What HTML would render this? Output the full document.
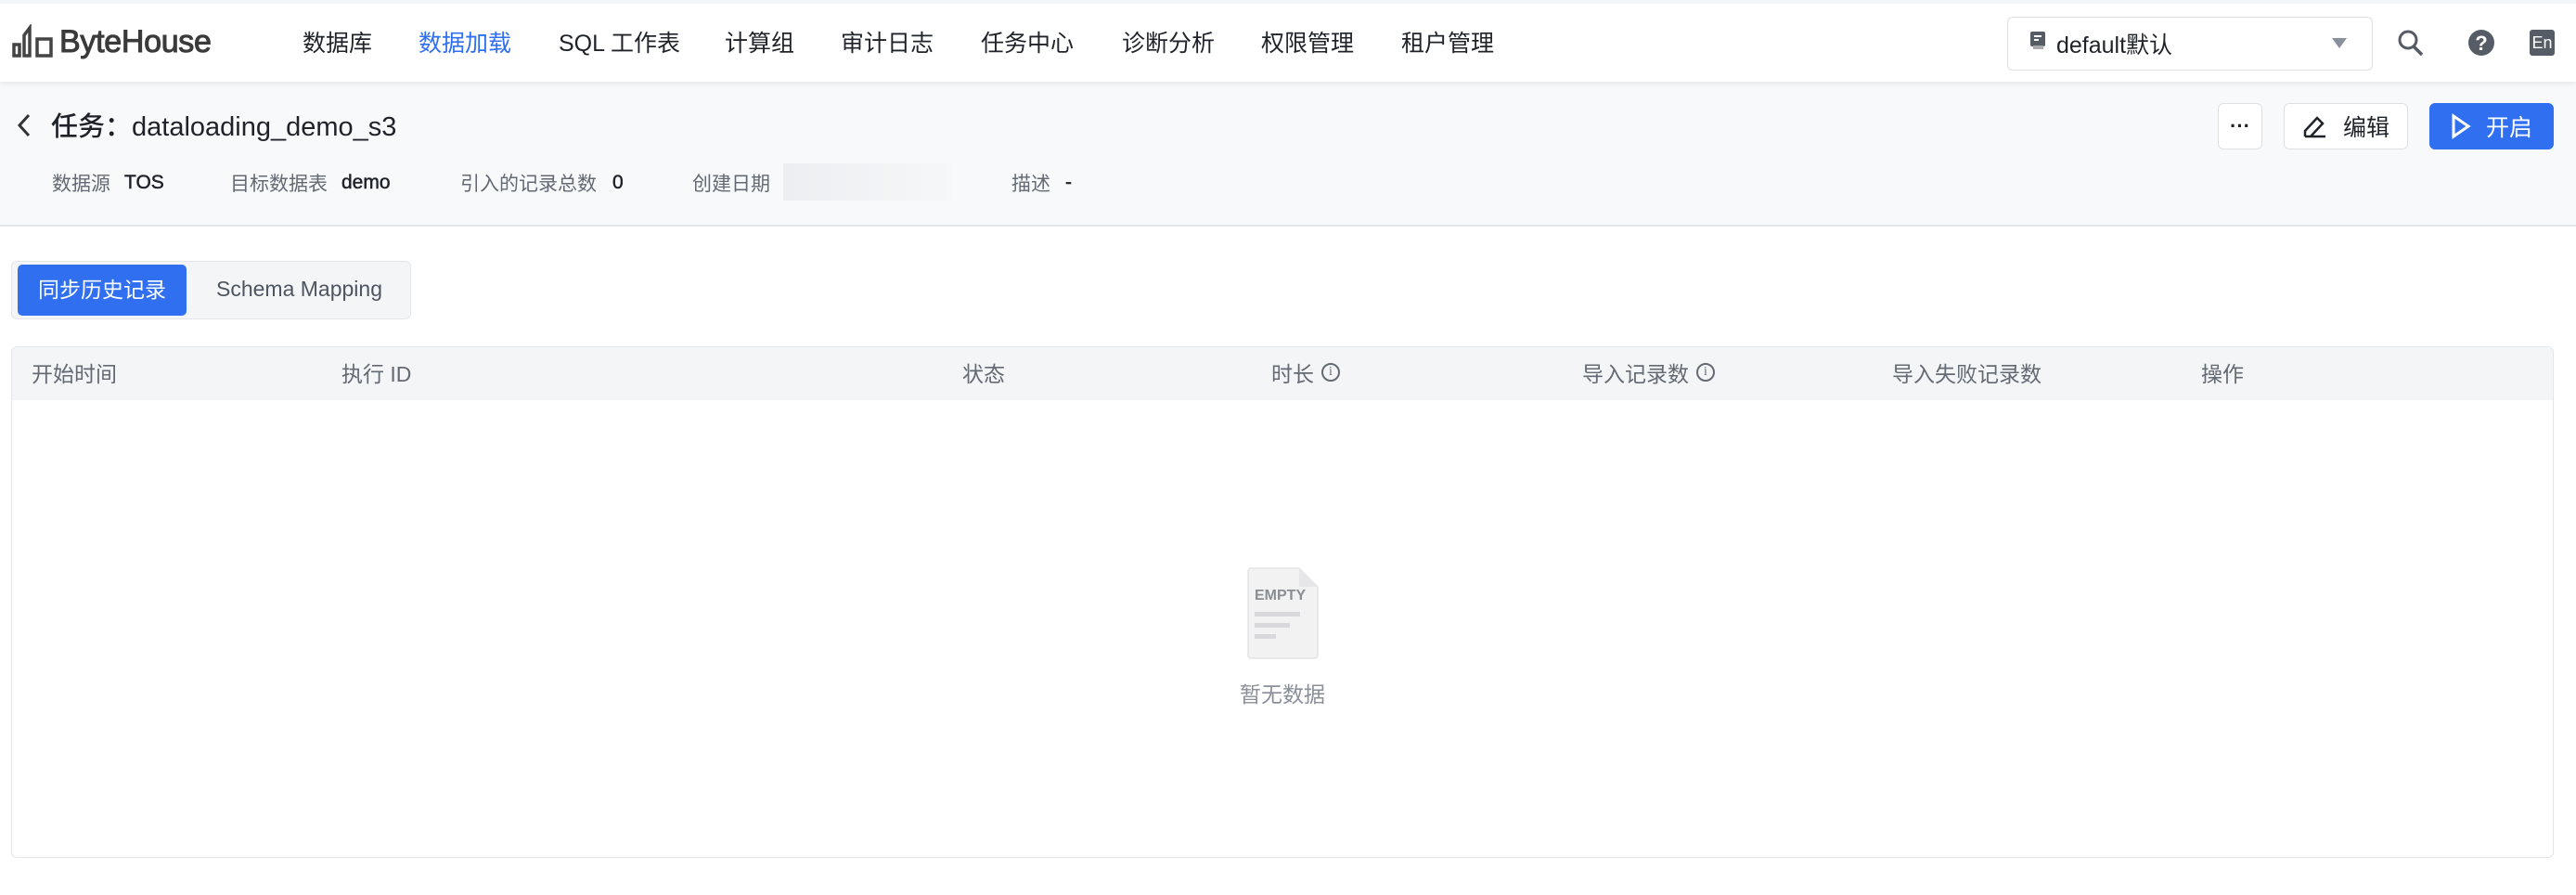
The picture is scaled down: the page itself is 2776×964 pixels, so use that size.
<!DOCTYPE html>
<html><head><meta charset="utf-8"><style>
*{box-sizing:border-box;margin:0;padding:0}
body{width:2776px;height:964px;background:#fff;font-family:"Liberation Sans","Noto Sans CJK SC",sans-serif;position:relative;overflow:hidden;color:#1f2329}
.abs{position:absolute;white-space:nowrap}
#hdr{position:absolute;left:0;top:0;width:2776px;height:88px;background:#fff;box-shadow:0 2px 6px rgba(0,0,0,.08);z-index:2;border-top:4px solid #f4f5f7}
.nav{font-size:25px;color:#1f2329;top:23px}
#sub{position:absolute;left:0;top:88px;width:2776px;height:156px;background:#f8f9fb;border-bottom:2px solid #e4e6ea}
.meta{font-size:21px;top:182px;color:#646a73}
.metav{font-size:21px;top:185px;color:#1f2329;-webkit-text-stroke:0.5px #1f2329}
.btn{position:absolute;top:111px;height:50px;border:1px solid #dee0e3;border-radius:6px;background:#fff;font-size:25px;display:flex;align-items:center;justify-content:center}
.th{font-size:23px;color:#646a73;top:384px;display:flex;align-items:center}
.ic{display:inline-block;width:20px;height:20px;border:2px solid #646a73;border-radius:50%;font-size:14px;line-height:16px;text-align:center;margin-left:8px;font-family:"Liberation Serif",serif}
</style></head><body>
<div id="hdr">
 <svg class="abs" style="left:12px;top:22px" width="46" height="38" viewBox="0 0 46 38"><path d="M3 22v12h6V22zM14 34V12l6-8v30zM28 34V16h15v18z" fill="none" stroke="#444" stroke-width="3.5"/></svg>
 <div class="abs" style="left:64px;top:22px;font-size:34px;color:#3a3a3a;-webkit-text-stroke:1px #3a3a3a;letter-spacing:-0.3px">ByteHouse</div>
 <div class="abs nav" style="left:326px">数据库</div>
 <div class="abs nav" style="left:451px;color:#2f6ff0">数据加载</div>
 <div class="abs nav" style="left:602px">SQL 工作表</div>
 <div class="abs nav" style="left:781px">计算组</div>
 <div class="abs nav" style="left:906px">审计日志</div>
 <div class="abs nav" style="left:1057px">任务中心</div>
 <div class="abs nav" style="left:1209px">诊断分析</div>
 <div class="abs nav" style="left:1359px">权限管理</div>
 <div class="abs nav" style="left:1510px">租户管理</div>
 <div class="abs" style="left:2163px;top:14px;width:394px;height:58px;border:1px solid #dee0e3;border-radius:6px"></div>
 <svg class="abs" style="left:2188px;top:30px" width="18" height="20"><rect x="0" y="0" width="16" height="16" rx="2" fill="#555c66"/><rect x="3" y="15" width="11" height="4" fill="#aaa"/><path d="M4 5h8M4 9h5" stroke="#fff" stroke-width="2"/></svg>
 <div class="abs" style="left:2216px;top:25px;font-size:25px">default默认</div>
 <svg class="abs" style="left:2513px;top:37px" width="16" height="12"><path d="M0 0h16L8 11z" fill="#8a9099"/></svg>
 <svg class="abs" style="left:2583px;top:27px" width="30" height="32"><circle cx="12" cy="12" r="9" fill="none" stroke="#555c66" stroke-width="3"/><path d="M18 19l9 9" stroke="#555c66" stroke-width="3.5"/></svg>
 <svg class="abs" style="left:2659px;top:27px" width="30" height="30"><circle cx="15" cy="15" r="14" fill="#555c66"/><text x="15" y="23" font-size="22" font-weight="bold" fill="#fff" text-anchor="middle" font-family="Liberation Sans">?</text></svg>
 <div class="abs" style="left:2726px;top:28px;width:27px;height:28px;background:#555c66;border-radius:3px;color:#fff;font-size:18px;text-align:center;line-height:28px">En</div>
</div>
<div id="sub">
 <svg class="abs" style="left:18px;top:34px" width="16" height="26"><path d="M13 2L3 13l10 11" fill="none" stroke="#333" stroke-width="3"/></svg>
 <div class="abs" style="left:55px;top:25px;font-size:29px;font-weight:500;color:#1f2329">任务：dataloading_demo_s3</div>
 <div class="btn" style="left:2390px;top:23px;width:48px;font-weight:bold;font-size:22px">···</div>
 <div class="btn" style="left:2461px;top:23px;width:134px"><svg width="28" height="28" style="margin-right:16px"><path d="M3 25h22M3 25v-6L16 5l6 6L9 25" fill="none" stroke="#1f2329" stroke-width="2.5"/></svg>编辑</div>
 <div class="btn" style="left:2618px;top:23px;width:134px;background:#2f6ff0;border-color:#2f6ff0;color:#fff"><svg width="22" height="28" style="margin-right:16px"><path d="M3 3v22l16-11z" fill="none" stroke="#fff" stroke-width="3"/></svg>开启</div>
</div>
<div class="abs meta" style="left:56px">数据源</div><div class="abs metav" style="left:134px">TOS</div>
<div class="abs meta" style="left:248px">目标数据表</div><div class="abs metav" style="left:368px">demo</div>
<div class="abs meta" style="left:496px">引入的记录总数</div><div class="abs metav" style="left:660px">0</div>
<div class="abs meta" style="left:746px">创建日期</div>
<div class="abs" style="left:844px;top:176px;width:182px;height:40px;background:linear-gradient(90deg,#eceef1,#f6f7f9)"></div>
<div class="abs meta" style="left:1090px">描述</div><div class="abs metav" style="left:1148px">-</div>

<div class="abs" style="left:12px;top:281px;width:431px;height:63px;background:#f4f5f7;border:1px solid #e4e6ea;border-radius:6px"></div>
<div class="abs" style="left:19px;top:285px;width:182px;height:55px;background:#2f6ff0;border-radius:5px;color:#fff;font-size:23px;text-align:center;line-height:55px">同步历史记录</div>
<div class="abs" style="left:233px;top:298px;font-size:23px;color:#4e5560">Schema Mapping</div>

<div class="abs" style="left:12px;top:373px;width:2740px;height:551px;border:1px solid #e4e6ea;border-radius:6px;overflow:hidden"><div style="height:57px;background:#f4f5f7"></div></div>
<div class="abs th" style="left:34px">开始时间</div>
<div class="abs th" style="left:368px">执行 ID</div>
<div class="abs th" style="left:1037px">状态</div>
<div class="abs th" style="left:1370px">时长<span class="ic">i</span></div>
<div class="abs th" style="left:1705px">导入记录数<span class="ic">i</span></div>
<div class="abs th" style="left:2039px">导入失败记录数</div>
<div class="abs th" style="left:2372px">操作</div>

<svg class="abs" style="left:1342px;top:610px" width="82" height="102" viewBox="0 0 82 102">
<path d="M6 2h52l20 20v74a3 3 0 0 1-3 3H6a3 3 0 0 1-3-3V5a3 3 0 0 1 3-3z" fill="#f2f2f3" stroke="#e4e4e6" stroke-width="1.5"/>
<text x="10" y="36" font-family="Liberation Sans" font-weight="bold" font-size="16" fill="#8a8d92">EMPTY</text>
<path d="M58 2v20h20z" fill="#e6e6e8"/>
<rect x="10" y="49" width="49" height="5" fill="#d9d9db"/><rect x="10" y="61" width="38" height="5" fill="#d9d9db"/><rect x="10" y="73" width="23" height="5" fill="#d9d9db"/>
</svg>
<div class="abs" style="left:1336px;top:729px;font-size:23px;color:#8a8f99">暂无数据</div>
</body></html>
